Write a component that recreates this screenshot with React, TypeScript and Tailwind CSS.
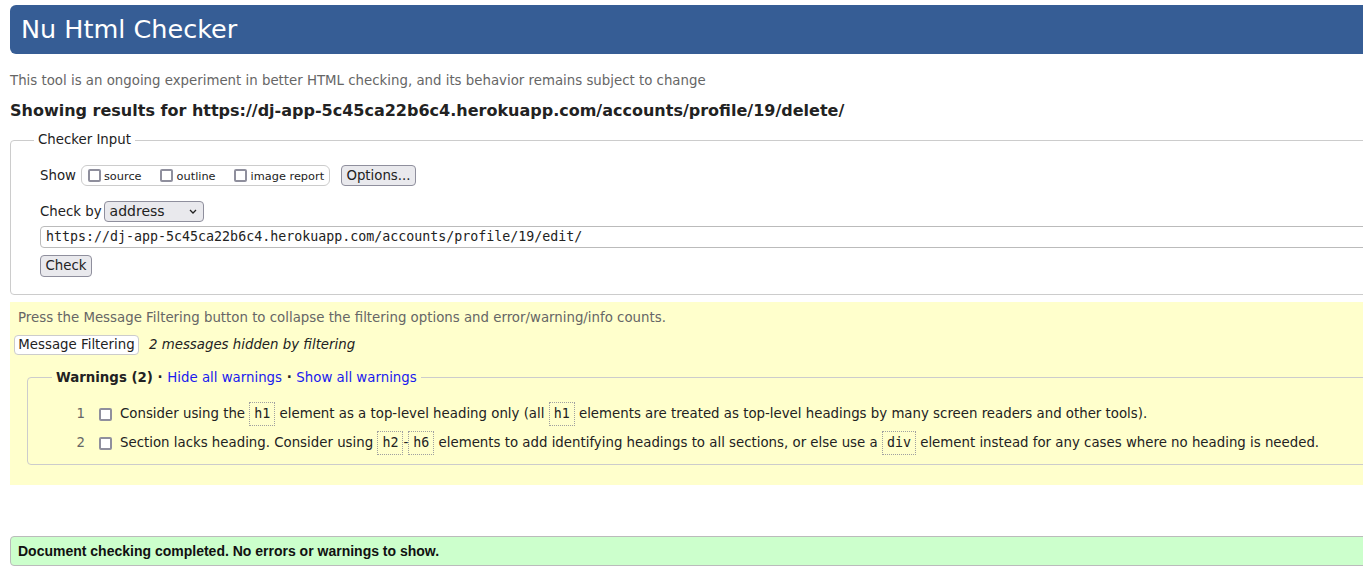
import React from "react";

function Box() {
  return <span className="inline-block w-[13px] h-[13px] border-2 border-[#8f8f9d] rounded-[2px] bg-white shrink-0" />;
}

function Code({ children }: { children: React.ReactNode }) {
  return (
    <span
      className="inline-flex items-center h-[24px] px-[4px] border border-dotted border-[#a0a0a0] text-[13.33px] align-middle"
      style={{ fontFamily: '"DejaVu Sans Mono", monospace' }}
    >
      {children}
    </span>
  );
}

export default function App() {
  return (
    <div
      className="w-[1363px] h-[574px] overflow-hidden bg-white text-[#222]"
      style={{ fontFamily: '"DejaVu Sans", Verdana, sans-serif' }}
    >
      <div className="w-[1430px] pl-[10px]">
        <header className="mt-[5px] h-[49px] bg-[#365d95] rounded-l-[6px] flex items-center pl-[11px] text-white text-[25.5px]">
          Nu Html Checker
        </header>
        <p className="mt-[18px] text-[13.33px] leading-[18px] text-[#666]">
          This tool is an ongoing experiment in better HTML checking, and its behavior remains subject to change
        </p>
        <h2 className="mt-[11px] font-bold text-[16px] leading-[20px]">
          Showing results for https://dj-app-5c45ca22b6c4.herokuapp.com/accounts/profile/19/delete/
        </h2>

        <fieldset className="mt-[11px] border border-[#ccc] rounded-[4px] pl-[29px] pb-[17px]">
          <legend className="-ml-[6px] px-[4px] text-[13.33px] leading-[16px]">Checker Input</legend>
          <div className="mt-[17px] flex items-center h-[21px] text-[13.33px]">
            <span>Show</span>
            <div className="ml-[5px] h-[21px] w-[249px] border border-[#ccc] rounded-[6px] flex items-center pl-[6px] text-[11.33px]">
              <Box />
              <span className="ml-[3px] mt-[1px]">source</span>
              <span className="ml-[18px] flex"><Box /></span>
              <span className="ml-[4px] mt-[1px]">outline</span>
              <span className="ml-[18px] flex"><Box /></span>
              <span className="ml-[4px] mt-[1px]">image report</span>
            </div>
            <button className="ml-[11px] h-[21px] w-[75px] bg-[#e9e9ed] border border-[#8f8f9d] rounded-[4px] text-[13.33px] flex items-center justify-center">
              Options...
            </button>
          </div>
          <div className="mt-[15px] flex items-center h-[21px] text-[13.33px]">
            <span>Check by</span>
            <div className="ml-[2px] h-[21px] w-[100px] bg-[#e9e9ed] border border-[#8f8f9d] rounded-[4px] flex items-center justify-between pl-[5px] pr-[6px] text-[14px]">
              <span>address</span>
              <svg width="8" height="5" viewBox="0 0 8 5" fill="none">
                <path d="M1 1l3 3 3-3" stroke="#222" strokeWidth="1.3" />
              </svg>
            </div>
          </div>
          <div
            className="mt-[4px] h-[22px] border border-[#bbb] rounded-[4px] flex items-center pl-[5px] text-[13.3px]"
            style={{ fontFamily: '"DejaVu Sans Mono", monospace' }}
          >
            https://dj-app-5c45ca22b6c4.herokuapp.com/accounts/profile/19/edit/
          </div>
          <button className="mt-[7px] h-[22px] w-[52px] bg-[#e9e9ed] border border-[#8f8f9d] rounded-[4px] text-[13.33px] flex items-center justify-center">
            Check
          </button>
        </fieldset>

        <section className="mt-[7px] bg-[#ffffcc] pl-[4px] pt-[7px] pb-[20px]">
          <p className="ml-[4px] text-[13.33px] leading-[18px] text-[#666]">
            Press the Message Filtering button to collapse the filtering options and error/warning/info counts.
          </p>
          <div className="mt-[8px] flex items-center text-[13.33px]">
            <button className="h-[20px] w-[125px] bg-white border border-[#ccc] rounded-[4px] text-[13.33px] flex items-center justify-center">
              Message Filtering
            </button>
            <span className="ml-[10px] italic">2 messages hidden by filtering</span>
          </div>
          <fieldset className="mt-[14px] ml-[13px] border border-[#ccc] rounded-[4px] pb-[9px] text-[13.33px]">
            <legend className="ml-[24px] px-[4px] leading-[17px]">
              <span className="font-bold">Warnings (2)</span>
              <span className="font-bold"> · </span>
              <span className="text-[#1a1aee]">Hide all warnings</span>
              <span className="font-bold"> · </span>
              <span className="text-[#1a1aee]">Show all warnings</span>
            </legend>
            <div className="mt-[16px] flex items-center h-[24px]">
              <span className="w-[57px] text-right text-[#666]">1</span>
              <span className="ml-[14px] flex"><Box /></span>
              <span className="ml-[8px] whitespace-nowrap">
                Consider using the <Code>h1</Code> element as a top-level heading only (all <Code>h1</Code> elements are treated as top-level headings by many screen readers and other tools).
              </span>
            </div>
            <div className="mt-[5px] flex items-center h-[24px]">
              <span className="w-[57px] text-right text-[#666]">2</span>
              <span className="ml-[14px] flex"><Box /></span>
              <span className="ml-[8px] whitespace-nowrap">
                Section lacks heading. Consider using <Code>h2</Code>-<Code>h6</Code> elements to add identifying headings to all sections, or else use a <Code>div</Code> element instead for any cases where no heading is needed.
              </span>
            </div>
          </fieldset>
        </section>

        <div
          className="mt-[51px] h-[30px] bg-[#ccffcc] border border-[#bbb] rounded-[4px] flex items-center pl-[7px] text-[14px] font-bold text-[#111]"
          style={{ fontFamily: '"Liberation Sans", Arial, sans-serif' }}
        >
          Document checking completed. No errors or warnings to show.
        </div>
      </div>
    </div>
  );
}
